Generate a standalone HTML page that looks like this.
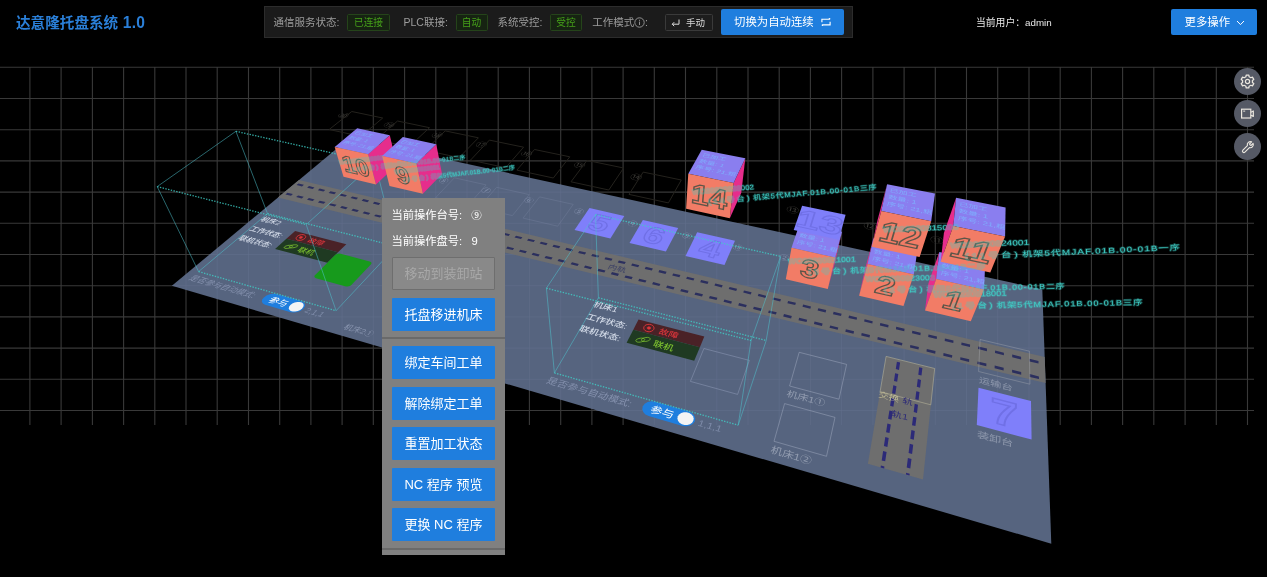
<!DOCTYPE html>
<html lang="zh-CN">
<head>
<meta charset="utf-8">
<title>达意隆托盘系统 1.0</title>
<style>
*{box-sizing:border-box;margin:0;padding:0}
html,body{width:1267px;height:577px;overflow:hidden;background:#000;}
body{position:relative;font-family:"Liberation Sans","Noto Sans CJK SC",sans-serif;color:#fff;}
.abs{position:absolute}
#title{position:absolute;left:16px;top:11.8px;height:22px;line-height:22px;font-size:14.6px;font-weight:bold;color:#2a7fd8;white-space:nowrap;letter-spacing:0px}
#status{position:absolute;left:264px;top:6px;width:589px;height:32px;background:#1b1b1b;border:1px solid #2c2c2c;}
#status span{position:absolute;white-space:nowrap}
.lbl{top:0;height:30px;line-height:30px;font-size:10.5px;color:#9c9c9c}
.tag{top:7px;height:17px;line-height:15px;font-size:9.7px;border:1px solid #25441a;background:#162312;color:#45a019;text-align:center;border-radius:1.5px}
.tag.def{border-color:#3a3a3a;background:#1d1d1d;color:#d6d6d6}
.btn{position:absolute;background:#1f7ede;color:#fff;border-radius:2px;white-space:nowrap;text-align:center}
#user{position:absolute;left:976px;top:12.6px;height:20px;line-height:20px;font-size:9.8px;color:#e8e8e8;white-space:nowrap}
.cbtn{position:absolute;width:27px;height:27px;border-radius:50%;background:#555965;left:1233.9px}
.cbtn svg{position:absolute;left:6px;top:6px;width:15px;height:15px}
#panel{position:absolute;left:382px;top:198px;width:123px;height:357px;background:#808080;}
#panel .t{position:absolute;left:9.6px;font-size:11.25px;color:#fff;white-space:nowrap;height:16px;line-height:16px}
#panel .b{position:absolute;left:10px;width:103px;height:33px;line-height:33px;font-size:13px;background:#1f7ede;color:#fff;text-align:center;border-radius:1px;white-space:nowrap}
#panel .b.dis{background:#898989;border:1px solid #6e6e6e;color:#a8a8a8;line-height:31px}
#panel .hr{position:absolute;left:0;width:123px;height:2px;background:#6a6a6a}
</style>
</head>
<body>
<div id="root" style="position:absolute;left:0;top:0;width:1267px;height:577px;will-change:transform;transform:translateZ(0)">
<svg class="abs" style="left:0;top:0" width="1267" height="577" viewBox="0 0 1267 577" font-family="Liberation Sans, Noto Sans CJK SC, sans-serif">
<path d="M-1.3 67.3V425M29.9 67.3V425M61.1 67.3V425M92.4 67.3V425M123.6 67.3V425M154.8 67.3V425M186 67.3V425M217.2 67.3V425M248.5 67.3V425M279.7 67.3V425M310.9 67.3V425M342.1 67.3V425M373.3 67.3V425M404.6 67.3V425M435.8 67.3V425M467 67.3V425M498.2 67.3V425M529.4 67.3V425M560.7 67.3V425M591.9 67.3V425M623.1 67.3V425M654.3 67.3V425M685.5 67.3V425M716.8 67.3V425M748 67.3V425M779.2 67.3V425M810.4 67.3V425M841.6 67.3V425M872.9 67.3V425M904.1 67.3V425M935.3 67.3V425M966.5 67.3V425M997.7 67.3V425M1029 67.3V425M1060.2 67.3V425M1091.4 67.3V425M1122.6 67.3V425M1153.8 67.3V425M1185.1 67.3V425M1216.3 67.3V425M1247.5 67.3V425M0 67.3H1254M0 98.5H1254M0 129.7H1254M0 160.9H1254M0 192.1H1254M0 223.3H1254M0 254.5H1254M0 285.7H1254M0 316.9H1254M0 348.1H1254M0 379.3H1254M0 410.5H1254" stroke="#393939" stroke-width="1.1" fill="none"/>
<g stroke="#24221d" stroke-width="1" fill="none">
<polygon points="351.8,111.5 382.7,118 360.9,136.4 329.2,129.5" fill="none"/>
<polygon points="397.5,121 429.5,127.7 408.9,146.8 376,139.7" fill="none"/>
<polygon points="445.2,130.9 478.4,137.8 459.1,157.6 425.1,150.3" fill="none"/>
<polygon points="489.4,140.1 523.6,147.2 505.7,167.7 470.5,160.1" fill="none"/>
<polygon points="534.5,149.5 569.8,156.8 553.3,178 516.9,170.1" fill="none"/>
<polygon points="587,160.4 623.6,168 608.8,190 571,181.8" fill="none"/>
<polygon points="643.2,172.1 681.3,180 668.4,202.9 629,194.4" fill="none"/>
</g>
<text transform="matrix(0.4567 0.0963 -0.3285 0.2599 340.8 117.4)" font-size="20" fill="#3b3a36" text-anchor="middle">⑳</text>
<text transform="matrix(0.4727 0.0997 -0.3115 0.2692 386.7 127.1)" font-size="20" fill="#3b3a36" text-anchor="middle">⑲</text>
<text transform="matrix(0.4897 0.1033 -0.2929 0.2792 434.9 137.3)" font-size="20" fill="#3b3a36" text-anchor="middle">⑱</text>
<text transform="matrix(0.5058 0.1067 -0.2749 0.2885 479.4 146.7)" font-size="20" fill="#3b3a36" text-anchor="middle">⑰</text>
<text transform="matrix(0.5225 0.1102 -0.2558 0.2982 524.8 156.2)" font-size="20" fill="#3b3a36" text-anchor="middle">⑯</text>
<text transform="matrix(0.5422 0.1143 -0.2326 0.3097 577.8 167.4)" font-size="20" fill="#3b3a36" text-anchor="middle">⑮</text>
<text transform="matrix(0.5638 0.1189 -0.2065 0.3222 634.5 179.4)" font-size="20" fill="#3b3a36" text-anchor="middle">⑭</text>
<text transform="matrix(0.6257 0.1320 -0.1282 0.3583 791.8 212.5)" font-size="20" fill="#3b3a36" text-anchor="middle">⑬</text>
<text transform="matrix(0.6575 0.1387 -0.0861 0.3769 869.4 228.9)" font-size="20" fill="#3b3a36" text-anchor="middle">⑫</text>
<text transform="matrix(0.6856 0.1446 -0.0480 0.3933 936.5 243.1)" font-size="20" fill="#3b3a36" text-anchor="middle">⑪</text>
<polygon points="349.2,138.3 1042.3,289.4 1051.3,543.7 171.9,285.8" fill="#56647f"/>
<clipPath id="fc"><polygon points="349.2,138.3 1042.3,289.4 1051.3,543.7 171.9,285.8"/></clipPath>
<path d="M-1.3 67.3V425M29.9 67.3V425M61.1 67.3V425M92.4 67.3V425M123.6 67.3V425M154.8 67.3V425M186 67.3V425M217.2 67.3V425M248.5 67.3V425M279.7 67.3V425M310.9 67.3V425M342.1 67.3V425M373.3 67.3V425M404.6 67.3V425M435.8 67.3V425M467 67.3V425M498.2 67.3V425M529.4 67.3V425M560.7 67.3V425M591.9 67.3V425M623.1 67.3V425M654.3 67.3V425M685.5 67.3V425M716.8 67.3V425M748 67.3V425M779.2 67.3V425M810.4 67.3V425M841.6 67.3V425M872.9 67.3V425M904.1 67.3V425M935.3 67.3V425M966.5 67.3V425M997.7 67.3V425M1029 67.3V425M1060.2 67.3V425M1091.4 67.3V425M1122.6 67.3V425M1153.8 67.3V425M1185.1 67.3V425M1216.3 67.3V425M1247.5 67.3V425M0 67.3H1254M0 98.5H1254M0 129.7H1254M0 160.9H1254M0 192.1H1254M0 223.3H1254M0 254.5H1254M0 285.7H1254M0 316.9H1254M0 348.1H1254M0 379.3H1254M0 410.5H1254" stroke="#63708c" stroke-width="1" fill="none" opacity="0.55" clip-path="url(#fc)"/>
<polygon points="299,180 1044.7,357 1045.6,383.1 277.9,197.6" fill="#6e6e6e"/>
<path d="M298.4 183.5L303.9 184.8L302 186.4L296.5 185.1ZM309 186.1L314.5 187.4L312.7 189L307.1 187.7ZM319.7 188.6L325.3 190L323.4 191.6L317.8 190.3ZM330.5 191.2L336.1 192.6L334.3 194.2L328.6 192.9ZM341.4 193.8L347 195.2L345.2 196.8L339.5 195.5ZM352.3 196.5L358.1 197.8L356.3 199.5L350.5 198.1ZM363.4 199.1L369.2 200.5L367.4 202.2L361.6 200.8ZM374.5 201.8L380.4 203.2L378.6 204.9L372.8 203.5ZM385.8 204.5L391.6 205.9L389.9 207.6L384 206.2ZM397.1 207.2L403 208.6L401.3 210.3L395.4 208.9ZM408.6 209.9L414.5 211.4L412.8 213.1L406.9 211.7ZM420.1 212.7L426.1 214.1L424.5 215.9L418.4 214.5ZM431.7 215.5L437.8 216.9L436.2 218.7L430.1 217.3ZM443.4 218.3L449.6 219.8L448 221.6L441.8 220.1ZM455.3 221.1L461.4 222.6L459.9 224.4L453.7 222.9ZM467.2 224L473.4 225.5L471.9 227.3L465.7 225.8ZM479.2 226.9L485.5 228.4L484 230.2L477.7 228.7ZM491.4 229.8L497.7 231.3L496.2 233.2L489.9 231.6ZM503.6 232.7L510 234.3L508.6 236.1L502.2 234.6ZM516 235.7L522.4 237.2L521 239.1L514.5 237.6ZM528.4 238.7L535 240.2L533.6 242.1L527 240.6ZM541 241.7L547.6 243.3L546.2 245.2L539.6 243.6ZM553.7 244.7L560.3 246.3L559 248.3L552.4 246.7ZM566.5 247.8L573.2 249.4L571.9 251.4L565.2 249.8ZM579.4 250.9L586.2 252.5L584.9 254.5L578.1 252.9ZM592.5 254L599.3 255.7L598 257.6L591.2 256ZM605.6 257.2L612.5 258.8L611.3 260.8L604.4 259.2ZM618.9 260.4L625.8 262L624.6 264.1L617.7 262.4ZM632.3 263.6L639.3 265.2L638.1 267.3L631.1 265.6ZM645.8 266.8L652.9 268.5L651.8 270.6L644.7 268.9ZM659.4 270.1L666.6 271.8L665.5 273.9L658.4 272.2ZM673.2 273.4L680.4 275.1L679.4 277.2L672.2 275.5ZM687.1 276.7L694.4 278.5L693.4 280.6L686.1 278.8ZM701.1 280.1L708.5 281.8L707.5 284L700.2 282.2ZM715.3 283.5L722.7 285.2L721.8 287.4L714.4 285.6ZM729.6 286.9L737.1 288.7L736.2 290.9L728.7 289.1ZM744 290.4L751.6 292.2L750.7 294.4L743.2 292.6ZM758.6 293.8L766.2 295.7L765.4 297.9L757.8 296.1ZM773.3 297.4L781 299.2L780.2 301.5L772.5 299.6ZM788.1 300.9L795.9 302.8L795.2 305.1L787.4 303.2ZM803.1 304.5L811 306.4L810.3 308.7L802.5 306.8ZM818.3 308.2L826.2 310.1L825.6 312.4L817.6 310.5ZM833.6 311.8L841.6 313.7L841 316.1L833 314.2ZM849 315.5L857.1 317.5L856.6 319.8L848.5 317.9ZM864.6 319.3L872.7 321.2L872.3 323.6L864.1 321.6ZM880.3 323L888.6 325L888.2 327.4L879.9 325.4ZM896.2 326.8L904.6 328.8L904.2 331.3L895.9 329.3ZM912.3 330.7L920.7 332.7L920.4 335.2L912 333.2ZM928.5 334.6L937 336.6L936.7 339.1L928.2 337.1ZM944.9 338.5L953.5 340.6L953.3 343.1L944.7 341ZM961.5 342.5L970.1 344.6L970 347.1L961.3 345ZM978.2 346.5L987 348.6L986.9 351.2L978.1 349.1ZM995.1 350.5L1003.9 352.7L1003.9 355.3L995 353.1ZM1012.2 354.6L1021.1 356.8L1021.1 359.4L1012.2 357.3ZM1029.4 358.8L1038.5 360.9L1038.5 363.6L1029.5 361.4Z" fill="#2b2f5e"/>
<path d="M287.4 192.8L292.9 194.1L291 195.8L285.4 194.4ZM298.1 195.4L303.7 196.8L301.8 198.4L296.1 197ZM308.9 198L314.6 199.4L312.6 201.1L307 199.7ZM319.8 200.7L325.5 202.1L323.6 203.8L317.9 202.4ZM330.8 203.4L336.6 204.8L334.7 206.5L328.9 205.1ZM341.9 206.1L347.7 207.5L345.9 209.2L340.1 207.8ZM353.1 208.8L358.9 210.2L357.1 212L351.3 210.6ZM364.4 211.6L370.3 213L368.5 214.8L362.6 213.3ZM375.8 214.4L381.7 215.8L379.9 217.6L374 216.1ZM387.2 217.2L393.2 218.6L391.5 220.4L385.5 218.9ZM398.8 220L404.8 221.5L403.1 223.3L397.1 221.8ZM410.5 222.8L416.6 224.3L414.9 226.1L408.8 224.6ZM422.3 225.7L428.4 227.2L426.7 229.1L420.6 227.5ZM434.1 228.6L440.3 230.1L438.7 232L432.5 230.5ZM446.1 231.5L452.4 233.1L450.8 234.9L444.5 233.4ZM458.2 234.5L464.5 236L462.9 237.9L456.6 236.4ZM470.4 237.5L476.8 239L475.2 240.9L468.8 239.4ZM482.7 240.5L489.1 242.1L487.6 244L481.2 242.4ZM495.1 243.5L501.6 245.1L500.1 247L493.6 245.4ZM507.6 246.6L514.2 248.2L512.7 250.1L506.1 248.5ZM520.3 249.7L526.9 251.3L525.4 253.2L518.8 251.6ZM533 252.8L539.7 254.4L538.3 256.4L531.6 254.8ZM545.9 255.9L552.6 257.6L551.2 259.6L544.5 257.9ZM558.9 259.1L565.6 260.7L564.3 262.8L557.5 261.1ZM572 262.3L578.8 264L577.5 266L570.6 264.3ZM585.2 265.5L592.1 267.2L590.8 269.3L583.9 267.6ZM598.5 268.8L605.5 270.5L604.3 272.6L597.3 270.9ZM612 272.1L619 273.8L617.8 275.9L610.8 274.2ZM625.6 275.4L632.7 277.1L631.5 279.3L624.4 277.5ZM639.3 278.7L646.5 280.5L645.3 282.6L638.2 280.9ZM653.2 282.1L660.4 283.9L659.3 286.1L652.1 284.3ZM667.2 285.5L674.5 287.3L673.4 289.5L666.1 287.7ZM681.3 289L688.6 290.8L687.6 293L680.2 291.2ZM695.5 292.5L703 294.3L702 296.5L694.5 294.7ZM709.9 296L717.4 297.8L716.5 300.1L708.9 298.2ZM724.4 299.5L732 301.4L731.1 303.7L723.5 301.8ZM739.1 303.1L746.8 305L745.9 307.3L738.2 305.4ZM753.9 306.7L761.6 308.6L760.8 310.9L753.1 309ZM768.9 310.4L776.7 312.3L775.9 314.6L768.1 312.7ZM784 314.1L791.8 316L791.1 318.4L783.2 316.4ZM799.2 317.8L807.2 319.8L806.5 322.1L798.5 320.2ZM814.6 321.6L822.6 323.5L822 325.9L813.9 324ZM830.2 325.4L838.3 327.4L837.7 329.8L829.5 327.8ZM845.9 329.2L854.1 331.2L853.5 333.7L845.3 331.7ZM861.7 333.1L870 335.1L869.5 337.6L861.2 335.6ZM877.8 337L886.1 339L885.7 341.6L877.3 339.5ZM894 341L902.4 343L902 345.6L893.5 343.5ZM910.3 344.9L918.9 347L918.5 349.6L910 347.5ZM926.8 349L935.5 351.1L935.2 353.7L926.5 351.6ZM943.5 353.1L952.3 355.2L952 357.8L943.3 355.7ZM960.4 357.2L969.2 359.3L969.1 362L960.2 359.8ZM977.5 361.4L986.4 363.5L986.3 366.2L977.3 364ZM994.7 365.6L1003.7 367.8L1003.6 370.5L994.6 368.2ZM1012.1 369.8L1021.2 372L1021.2 374.8L1012.1 372.5ZM1029.7 374.1L1038.9 376.4L1039 379.1L1029.7 376.9Z" fill="#2b2f5e"/>
<text transform="matrix(0.4447 0.1083 -0.1762 0.2948 607.0 268.4)" font-size="20" fill="#3a3f66" text-anchor="start">内轨</text>
<polygon points="886.1,356.4 934.7,368.5 923,479.4 867.9,463.7" fill="#6e6e6e"/>
<path d="M896.9 361.7L900.1 362.5L899 369.9L895.8 369.1ZM895.1 373.3L898.3 374.1L897.2 381.8L894 381ZM893.3 385.3L896.5 386.2L895.3 394L892.1 393.2ZM891.4 397.7L894.7 398.5L893.4 406.7L890.1 405.8ZM889.4 410.4L892.8 411.3L891.5 419.7L888.1 418.8ZM887.4 423.6L890.8 424.5L889.5 433.1L886.1 432.2ZM885.3 437.1L888.7 438.1L887.4 447L883.9 446ZM883.1 451.1L886.6 452.1L885.2 461.3L881.7 460.4ZM880.9 465.6L884.4 466.6L884.2 468.4L880.6 467.4Z" fill="#2c2a78"/>
<path d="M919.2 367.3L922.4 368.1L921.5 375.6L918.3 374.8ZM917.8 379.1L921 379.9L920.1 387.7L916.8 386.8ZM916.3 391.3L919.5 392.1L918.6 400.1L915.3 399.2ZM914.7 403.8L918 404.7L917 412.9L913.7 412ZM913.1 416.7L916.5 417.6L915.4 426.1L912 425.2ZM911.4 430.1L914.8 431L913.8 439.8L910.3 438.8ZM909.7 443.8L913.2 444.8L912.1 453.9L908.6 452.9ZM907.9 458.1L911.5 459.1L910.3 468.4L906.7 467.4ZM906.1 472.8L909.7 473.8L909.5 475.6L905.9 474.6Z" fill="#2c2a78"/>
<polygon points="886.1,356.4 934.7,368.5 930.8,404.8 880.1,391.6" fill="none" stroke="#b9b59a" stroke-width="0.8" opacity="0.7"/>
<text transform="matrix(0.5178 0.1362 -0.0637 0.3728 878.0 396.8)" font-size="20" fill="#d8d2a0" text-anchor="start" opacity="0.75">交换</text>
<text transform="matrix(0.5256 0.1383 -0.0531 0.3785 902.0 403.1)" font-size="20" fill="#2c2a78" text-anchor="start">轨</text>
<text transform="matrix(0.5320 0.1426 -0.0590 0.3904 891.1 415.9)" font-size="20" fill="#2c2a78" text-anchor="start">轨1</text>
<polygon points="980.1,339.5 1029.4,351.2 1029.9,384.2 978.6,371.5" fill="none" stroke="#b0b4ba" stroke-width="0.8" opacity="0.45"/>
<text transform="matrix(0.5632 0.1412 -0.0185 0.3862 978.8 382.5)" font-size="20" fill="#b9c0cf" text-anchor="start" opacity="0.55">运输台</text>
<g stroke="#7d89a6" stroke-width="0.8" fill="none" opacity="0.4">
<polygon points="454.4,177.8 486.1,184.9 468.1,205.3 435.6,197.7" fill="none"/>
<polygon points="496.6,187.3 529.2,194.6 512.4,215.6 478.9,207.8" fill="none"/>
<polygon points="539.6,196.9 573.2,204.4 557.7,226.2 523.1,218.1" fill="none"/>
</g>
<text transform="matrix(0.4170 0.0946 -0.2458 0.2566 441.9 182.8)" font-size="20" fill="#8f9bb8" text-anchor="middle" opacity="0.8">⑧</text>
<text transform="matrix(0.4300 0.0976 -0.2312 0.2647 484.3 192.4)" font-size="20" fill="#8f9bb8" text-anchor="middle" opacity="0.8">⑦</text>
<text transform="matrix(0.4434 0.1006 -0.2158 0.2731 527.4 202.2)" font-size="20" fill="#8f9bb8" text-anchor="middle" opacity="0.8">⑥</text>
<text transform="matrix(0.4593 0.1042 -0.1971 0.2830 577.6 213.6)" font-size="20" fill="#8f9bb8" text-anchor="middle" opacity="0.8">⑤</text>
<text transform="matrix(0.4766 0.1081 -0.1762 0.2939 631.3 225.8)" font-size="20" fill="#8f9bb8" text-anchor="middle" opacity="0.8">④</text>
<text transform="matrix(0.4944 0.1122 -0.1542 0.3051 685.8 238.1)" font-size="20" fill="#8f9bb8" text-anchor="middle" opacity="0.8">③</text>
<text transform="matrix(0.5114 0.1160 -0.1327 0.3157 736.7 249.7)" font-size="20" fill="#8f9bb8" text-anchor="middle" opacity="0.8">⑬</text>
<text transform="matrix(0.5272 0.1196 -0.1123 0.3257 783.4 260.3)" font-size="20" fill="#8f9bb8" text-anchor="middle" opacity="0.8">②</text>
<text transform="matrix(0.4057 0.0921 -0.2582 0.2495 404.4 174.3)" font-size="20" fill="#8f9bb8" text-anchor="middle" opacity="0.8">⑨</text>
<text transform="matrix(0.3656 0.0942 -0.3039 0.2560 259.7 220.4)" font-size="20" fill="#dfe6f2" text-anchor="start" opacity="0.92" font-weight="500">机床2</text>
<text transform="matrix(0.3695 0.0970 -0.3131 0.2637 248.4 230.0)" font-size="20" fill="#dfe6f2" text-anchor="start" opacity="0.92" font-weight="500">工作状态:</text>
<text transform="matrix(0.3731 0.0998 -0.3221 0.2713 237.4 239.2)" font-size="20" fill="#dfe6f2" text-anchor="start" opacity="0.92" font-weight="500">联机状态:</text>
<polygon points="295.1,230.9 346.3,244.2 338,252.3 286.4,238.8" fill="#4a2227"/>
<polygon points="286.4,238.8 338,252.3 327.4,262.8 275.1,248.9" fill="#1f3a22"/>
<polygon points="304.7,238.5 303.5,239.3 301.9,240 300.2,240.3 298.6,240.3 297.3,240 296.4,239.3 296.1,238.4 296.3,237.5 297.1,236.5 298.3,235.6 299.9,235 301.5,234.6 303.1,234.6 304.4,235 305.3,235.6 305.7,236.5 305.5,237.5" fill="none" stroke="#e0353a" stroke-width="0.9"/>
<polygon points="302.2,237.8 301.7,238.1 301.2,238.3 300.7,238.4 300.1,238.4 299.7,238.3 299.4,238.1 299.3,237.8 299.3,237.5 299.6,237.1 300,236.8 300.5,236.6 301.1,236.5 301.6,236.5 302.1,236.6 302.4,236.8 302.5,237.1 302.4,237.5" fill="#e0353a" stroke="#e0353a" stroke-width="0.6"/>
<text transform="matrix(0.3717 0.0971 -0.2845 0.2641 306.7 241.8)" font-size="20" fill="#d8343a" text-anchor="start" font-weight="500">故障</text>
<polygon points="292.5,246.2 292.2,246.7 291.5,247.3 290.3,247.8 288.9,248.1 287.4,248.4 286.1,248.4 285,248.3 284.3,247.9 284.1,247.5 284.4,247 285.2,246.4 286.3,245.9 287.7,245.5 289.2,245.3 290.5,245.3 291.6,245.4 292.3,245.7" fill="none" stroke="#7bbf2e" stroke-width="0.8"/>
<polygon points="297.7,245.7 297.5,246.2 296.7,246.7 295.5,247.2 294.1,247.6 292.7,247.8 291.3,247.9 290.2,247.7 289.5,247.4 289.3,247 289.6,246.4 290.4,245.9 291.5,245.4 292.9,245 294.4,244.8 295.7,244.8 296.8,244.9 297.5,245.2" fill="none" stroke="#7bbf2e" stroke-width="0.8"/>
<text transform="matrix(0.3885 0.1033 -0.3028 0.2811 296.5 251.2)" font-size="20" fill="#7bbf2e" text-anchor="start" font-weight="500">联机</text>
<polygon points="369.7,261.4 370.8,261.9 371.4,262.6 371.4,263.6 370.8,264.5 351.6,284.8 350.4,285.7 348.9,286.3 347.3,286.5 345.9,286.4 316,278.2 314.9,277.6 314.4,276.8 314.5,275.8 315.2,274.9 335.1,255.1 336.3,254.3 337.7,253.8 339.2,253.6 340.6,253.7" fill="#179a1c"/>
<text transform="matrix(0.3883 0.1122 -0.3633 0.3056 188.2 279.5)" font-size="20" fill="#8995b2" text-anchor="start" opacity="0.9">是否参与自动模式:</text>
<polygon points="301.7,301.2 303.9,302.4 305,304.2 304.8,306.4 303.3,308.7 300.7,310.7 297.3,312 293.9,312.6 290.7,312.2 265.1,304.8 262.9,303.6 261.9,301.8 262.2,299.6 263.9,297.4 266.5,295.5 269.8,294.2 273.2,293.7 276.3,294" fill="#1f7ede"/>
<text transform="matrix(0.4405 0.1271 -0.3615 0.3467 267.2 301.7)" font-size="20" fill="#fff" text-anchor="start">参与</text>
<polygon points="302.1,308.4 300.2,309.9 297.8,311 295.2,311.6 292.7,311.6 290.7,311 289.3,309.8 288.8,308.4 289.1,306.7 290.4,305 292.3,303.5 294.7,302.4 297.3,301.9 299.7,301.9 301.8,302.5 303.1,303.5 303.7,305 303.3,306.7" fill="#f4f4f4"/>
<text transform="matrix(0.3963 0.1143 -0.3051 0.3120 303.7 312.0)" font-size="20" fill="#8390ae" text-anchor="start" opacity="0.9">2,1,1</text>
<text transform="matrix(0.4667 0.1203 -0.1926 0.3281 592.4 306.2)" font-size="20" fill="#dfe6f2" text-anchor="start" opacity="0.92" font-weight="500">机床1</text>
<text transform="matrix(0.4734 0.1243 -0.1991 0.3393 585.2 318.4)" font-size="20" fill="#dfe6f2" text-anchor="start" opacity="0.92" font-weight="500">工作状态:</text>
<text transform="matrix(0.4800 0.1283 -0.2057 0.3504 578.2 330.4)" font-size="20" fill="#dfe6f2" text-anchor="start" opacity="0.92" font-weight="500">联机状态:</text>
<polygon points="638.5,319.6 704.3,336.6 699.9,347.2 633.3,329.7" fill="#4a2227"/>
<polygon points="633.3,329.7 699.9,347.2 694.2,360.8 626.6,342.8" fill="#1f3a22"/>
<polygon points="653.8,329.3 652.9,330.4 651.5,331.2 649.8,331.7 648,331.7 646.3,331.2 644.9,330.4 644,329.3 643.7,328 644,326.7 644.9,325.6 646.2,324.8 647.9,324.4 649.7,324.4 651.4,324.8 652.8,325.6 653.7,326.8 654.1,328" fill="none" stroke="#e0353a" stroke-width="0.9"/>
<polygon points="650.5,328.4 650.2,328.8 649.8,329.1 649.2,329.2 648.6,329.2 648,329.1 647.6,328.8 647.3,328.4 647.2,328 647.2,327.6 647.5,327.2 648,326.9 648.6,326.8 649.2,326.8 649.7,326.9 650.2,327.2 650.5,327.6 650.6,328" fill="#e0353a" stroke="#e0353a" stroke-width="0.6"/>
<text transform="matrix(0.4785 0.1250 -0.1632 0.3414 658.0 333.6)" font-size="20" fill="#d8343a" text-anchor="start" font-weight="500">故障</text>
<polygon points="644.7,339.3 644.7,340 644.1,340.7 643.1,341.3 641.7,341.8 640.2,342.1 638.7,342.2 637.3,342 636.4,341.6 635.9,341 635.9,340.3 636.4,339.6 637.5,339 638.8,338.5 640.4,338.2 641.9,338.1 643.2,338.3 644.2,338.7" fill="none" stroke="#7bbf2e" stroke-width="0.8"/>
<polygon points="650.2,338.6 650.2,339.3 649.7,340 648.7,340.6 647.3,341.1 645.8,341.4 644.3,341.5 642.9,341.3 641.9,340.9 641.4,340.3 641.5,339.6 642,338.9 643,338.3 644.4,337.8 645.9,337.5 647.4,337.4 648.8,337.6 649.7,338" fill="none" stroke="#7bbf2e" stroke-width="0.8"/>
<text transform="matrix(0.5020 0.1335 -0.1744 0.3647 652.2 345.8)" font-size="20" fill="#7bbf2e" text-anchor="start" font-weight="500">联机</text>
<polygon points="703.9,348.5 749.3,360.4 737.6,394.4 690.4,381.4" fill="none" stroke="#8f9bb8" stroke-width="0.8" opacity="0.65"/>
<text transform="matrix(0.5078 0.1467 -0.2363 0.4012 545.8 382.7)" font-size="20" fill="#8995b2" text-anchor="start" opacity="0.9">是否参与自动模式:</text>
<polygon points="688.4,411.3 691.7,412.8 694.1,415.3 695.2,418.2 694.8,421.2 693,423.8 690.1,425.6 686.4,426.3 682.6,425.9 648.7,416 645.4,414.5 643.2,412.1 642.3,409.2 642.8,406.2 644.7,403.7 647.7,402 651.3,401.3 655,401.8" fill="#1f7ede"/>
<text transform="matrix(0.5812 0.1677 -0.2037 0.4593 649.2 412.0)" font-size="20" fill="#fff" text-anchor="start">参与</text>
<polygon points="693.3,420.8 692.1,422.7 690,424.2 687.3,425 684.5,425 681.8,424.2 679.5,422.7 678,420.8 677.4,418.5 677.8,416.3 679.1,414.4 681.2,412.9 683.8,412.2 686.6,412.2 689.3,412.9 691.5,414.4 693,416.3 693.7,418.5" fill="#f4f4f4"/>
<text transform="matrix(0.5251 0.1515 -0.1574 0.4150 697.3 425.5)" font-size="20" fill="#8390ae" text-anchor="start" opacity="0.9">1,1,1</text>
<text transform="matrix(0.3965 0.1152 -0.2842 0.3145 342.8 328.5)" font-size="20" fill="#9aa5bf" text-anchor="start" opacity="0.75">机床2①</text>
<polygon points="799.2,352.3 846.6,364.4 839,399.2 789.6,386" fill="none" stroke="#aab3c8" stroke-width="0.8" opacity="0.55"/>
<text transform="matrix(0.5399 0.1461 -0.1136 0.3999 786.0 395.9)" font-size="20" fill="#b9c0cf" text-anchor="start" opacity="0.6">机床1①</text>
<polygon points="784.6,403.6 835,417.4 826.5,456.3 774,441.3" fill="none" stroke="#aab3c8" stroke-width="0.8" opacity="0.55"/>
<text transform="matrix(0.5745 0.1669 -0.1300 0.4575 769.9 452.6)" font-size="20" fill="#b9c0cf" text-anchor="start" opacity="0.6">机床1②</text>
<polygon points="589.5,208.1 624.3,215.9 610.4,238.4 574.5,230.1" fill="#7f7ffa"/>
<text transform="matrix(1.6735 0.3872 -0.6859 1.0524 594.8 230.4)" font-size="20" fill="none" text-anchor="middle" stroke="#7070e6" stroke-width="0.8" font-weight="bold">5</text>
<polygon points="642.9,220 678.2,227.9 665.9,251.4 629.5,242.9" fill="#7f7ffa"/>
<text transform="matrix(1.7376 0.4020 -0.6079 1.0934 649.8 243.1)" font-size="20" fill="none" text-anchor="middle" stroke="#7070e6" stroke-width="0.8" font-weight="bold">6</text>
<polygon points="697.2,232.2 735,240.7 724.5,265 685.5,255.9" fill="#7f7ffa"/>
<text transform="matrix(1.8053 0.4177 -0.5235 1.1368 706.8 256.3)" font-size="20" fill="none" text-anchor="middle" stroke="#7070e6" stroke-width="0.8" font-weight="bold">4</text>
<polygon points="978.5,387.8 1031,401.1 1031.6,439.6 976.8,425.1" fill="#7f7ffa"/>
<text transform="matrix(2.4741 0.6475 -0.0276 1.7738 1004.1 425.4)" font-size="20" fill="none" text-anchor="middle" stroke="#7070e6" stroke-width="0.8" font-weight="bold">7</text>
<text transform="matrix(0.6015 0.1609 -0.0207 0.4409 977.0 437.3)" font-size="20" fill="#b9c0cf" text-anchor="start" opacity="0.55">装卸台</text>
<line x1="267.5" y1="213.6" x2="235.9" y2="131.3" stroke="#4fc4cf" stroke-width="0.8" opacity="0.65"/>
<line x1="198.6" y1="271.6" x2="157.2" y2="186.6" stroke="#4fc4cf" stroke-width="0.8" opacity="0.65"/>
<line x1="396.2" y1="246.4" x2="374.8" y2="162.6" stroke="#4fc4cf" stroke-width="0.8" opacity="0.65"/>
<line x1="336.1" y1="310.7" x2="306.2" y2="224.6" stroke="#4fc4cf" stroke-width="0.8" opacity="0.65"/>
<line x1="267.5" y1="213.6" x2="198.6" y2="271.6" stroke="#4fc4cf" stroke-width="0.8" opacity="0.65"/>
<line x1="396.2" y1="246.4" x2="336.1" y2="310.7" stroke="#4fc4cf" stroke-width="0.8" opacity="0.65"/>
<line x1="235.9" y1="131.3" x2="157.2" y2="186.6" stroke="#4fc4cf" stroke-width="0.8" opacity="0.65"/>
<line x1="374.8" y1="162.6" x2="306.2" y2="224.6" stroke="#4fc4cf" stroke-width="0.8" opacity="0.65"/>
<line x1="267.5" y1="213.6" x2="396.2" y2="246.4" stroke="#3fd0c8" stroke-width="1.3" stroke-dasharray="1.4 1.4" opacity="0.8"/>
<line x1="198.6" y1="271.6" x2="336.1" y2="310.7" stroke="#3fd0c8" stroke-width="1.3" stroke-dasharray="1.4 1.4" opacity="0.8"/>
<line x1="235.9" y1="131.3" x2="374.8" y2="162.6" stroke="#3fd0c8" stroke-width="1.3" stroke-dasharray="1.4 1.4" opacity="0.8"/>
<line x1="157.2" y1="186.6" x2="306.2" y2="224.6" stroke="#3fd0c8" stroke-width="1.3" stroke-dasharray="1.4 1.4" opacity="0.8"/>
<line x1="598.4" y1="297.8" x2="595.5" y2="214.6" stroke="#4fc4cf" stroke-width="0.8" opacity="0.65"/>
<line x1="554.4" y1="372.9" x2="546.4" y2="288.2" stroke="#4fc4cf" stroke-width="0.8" opacity="0.65"/>
<line x1="766.2" y1="340.5" x2="780.6" y2="256.4" stroke="#4fc4cf" stroke-width="0.8" opacity="0.65"/>
<line x1="738.2" y1="425.2" x2="751.1" y2="340.5" stroke="#4fc4cf" stroke-width="0.8" opacity="0.65"/>
<line x1="598.4" y1="297.8" x2="554.4" y2="372.9" stroke="#4fc4cf" stroke-width="0.8" opacity="0.65"/>
<line x1="766.2" y1="340.5" x2="738.2" y2="425.2" stroke="#4fc4cf" stroke-width="0.8" opacity="0.65"/>
<line x1="595.5" y1="214.6" x2="546.4" y2="288.2" stroke="#4fc4cf" stroke-width="0.8" opacity="0.65"/>
<line x1="780.6" y1="256.4" x2="751.1" y2="340.5" stroke="#4fc4cf" stroke-width="0.8" opacity="0.65"/>
<line x1="598.4" y1="297.8" x2="766.2" y2="340.5" stroke="#3fd0c8" stroke-width="1.3" stroke-dasharray="1.4 1.4" opacity="0.8"/>
<line x1="554.4" y1="372.9" x2="738.2" y2="425.2" stroke="#3fd0c8" stroke-width="1.3" stroke-dasharray="1.4 1.4" opacity="0.8"/>
<line x1="595.5" y1="214.6" x2="780.6" y2="256.4" stroke="#3fd0c8" stroke-width="1.3" stroke-dasharray="1.4 1.4" opacity="0.8"/>
<line x1="546.4" y1="288.2" x2="751.1" y2="340.5" stroke="#3fd0c8" stroke-width="1.3" stroke-dasharray="1.4 1.4" opacity="0.8"/>
<g transform="translate(381 166.5) rotate(-6.39) scale(1.000 1)" fill="#3fd0c8" font-size="5.50" opacity="1.0"><text x="0" y="1.98" textLength="84.5">机架5代MJAF.01B.00-01B二序</text><text x="-2.8" y="1.98" text-anchor="end" textLength="29.7">(10号台)</text><text x="3.0" y="-6.82" text-anchor="end" textLength="44.3">WO20230823002</text></g>
<g transform="translate(431 176.8) rotate(-6.41) scale(1.000 1)" fill="#3fd0c8" font-size="5.60" opacity="1.0"><text x="0" y="2.02" textLength="84.2">机架5代MJAF.01B.00-01B二序</text><text x="-2.8" y="2.02" text-anchor="end" textLength="25.2">(9号台)</text><text x="9.5" y="-6.94" text-anchor="end" textLength="45.1">WO20230823001</text></g>
<g transform="translate(753.4 197.6) rotate(-4.93) scale(1.146 1)" fill="#3fd0c8" font-size="6.70" opacity="1.0"><text x="0" y="2.41" textLength="107.6">机架5代MJAF.01B.00-01B三序</text><text x="-3.4" y="2.41" text-anchor="end" textLength="36.2">(14号台)</text><text x="1.2" y="-8.31" text-anchor="end" textLength="54.0">WO20230828002</text></g>
<g transform="translate(850.4 270.5) rotate(-1.83) scale(1.198 1)" fill="#3fd0c8" font-size="7.00" opacity="1.0"><text x="0" y="2.52" textLength="112.4">机架5代MJAF.01B.00-01B二序</text><text x="-3.5" y="2.52" text-anchor="end" textLength="31.5">(3号台)</text><text x="4.6" y="-8.68" text-anchor="end" textLength="56.4">WO20230811001</text></g>
<g transform="translate(926.7 289) rotate(-1.29) scale(1.206 1)" fill="#3fd0c8" font-size="7.10" opacity="1.0"><text x="0" y="2.56" textLength="114.1">机架5代MJAF.01B.00-01B二序</text><text x="-3.5" y="2.56" text-anchor="end" textLength="31.9">(2号台)</text><text x="6.8" y="-8.80" text-anchor="end" textLength="57.2">WO20230823003</text></g>
<g transform="translate(997 305) rotate(-1.11) scale(1.238 1)" fill="#3fd0c8" font-size="7.30" opacity="1.0"><text x="0" y="2.63" textLength="117.3">机架5代MJAF.01B.00-01B三序</text><text x="-3.6" y="2.63" text-anchor="end" textLength="32.9">(1号台)</text><text x="7.8" y="-9.05" text-anchor="end" textLength="58.8">WO20230818001</text></g>
<g transform="translate(950 238.5) rotate(-1.91) scale(1.316 1)" fill="#3fd0c8" font-size="7.10" opacity="1.0"><text x="6.6" y="-8.80" text-anchor="end" textLength="57.2">WO20230815000</text></g>
<g transform="translate(1022.5 254) rotate(-2.48) scale(1.338 1)" fill="#3fd0c8" font-size="7.30" opacity="1.0"><text x="0" y="2.63" textLength="117.3">机架5代MJAF.01B.00-01B一序</text><text x="-3.6" y="2.63" text-anchor="end" textLength="39.4">(11号台)</text><text x="5.2" y="-9.05" text-anchor="end" textLength="58.8">WO20230824001</text></g>
<polygon points="389.8,135.2 368.1,154.3 376,184.4 396.8,164.9" fill="#e62d8c"/>
<polygon points="357.2,128.2 389.8,135.2 368.1,154.3 334.7,146.9" fill="#8a7eef"/>
<polygon points="334.7,146.9 368.1,154.3 376,184.4 343.5,176.8" fill="#f27c66"/>
<text transform="matrix(0.2961 0.0639 -0.2080 0.1728 353.7 133.6)" font-size="20" fill="#7db4ff" text-anchor="start" opacity="0.85">已加工</text>
<text transform="matrix(0.2980 0.0650 -0.2116 0.1758 348.0 138.4)" font-size="20" fill="#7db4ff" text-anchor="start" opacity="0.85">数量: 1</text>
<text transform="matrix(0.3000 0.0661 -0.2153 0.1789 342.2 143.2)" font-size="20" fill="#7db4ff" text-anchor="start" opacity="0.85">序号: 21,粗</text>
<text transform="matrix(1.1934 0.2756 0.3259 1.1814 357.9 174.4)" font-size="20" fill="none" text-anchor="middle" stroke="#5d5548" stroke-width="0.9" font-weight="bold">10</text>
<polygon points="436.3,144.2 416.4,163.5 422.9,193.8 442,174.1" fill="#e62d8c"/>
<polygon points="402.9,137.1 436.3,144.2 416.4,163.5 382.1,155.9" fill="#8a7eef"/>
<polygon points="382.1,155.9 416.4,163.5 422.9,193.8 389.5,186.1" fill="#f27c66"/>
<text transform="matrix(0.3060 0.0660 -0.1966 0.1784 399.7 142.7)" font-size="20" fill="#7db4ff" text-anchor="start" opacity="0.85">已加工</text>
<text transform="matrix(0.3081 0.0671 -0.2000 0.1816 394.4 147.6)" font-size="20" fill="#7db4ff" text-anchor="start" opacity="0.85">数量: 1</text>
<text transform="matrix(0.3101 0.0683 -0.2036 0.1848 388.9 152.6)" font-size="20" fill="#7db4ff" text-anchor="start" opacity="0.85">序号: 21,粗</text>
<text transform="matrix(1.2326 0.2839 0.2735 1.1877 404.7 183.7)" font-size="20" fill="none" text-anchor="middle" stroke="#5d5548" stroke-width="0.9" font-weight="bold">9</text>
<polygon points="939.3,251.9 936.2,278.9 925,310.6 928.4,283.4" fill="#e62d8c"/>
<polygon points="939.3,251.9 985.3,261.7 984,289.5 936.2,278.9" fill="#8a7eef"/>
<polygon points="936.2,278.9 984,289.5 970.8,321.2 925,310.6" fill="#f27c66"/>
<text transform="matrix(0.4414 0.0952 -0.0288 0.2592 942.0 260.1)" font-size="20" fill="#7db4ff" text-anchor="start" opacity="0.85">已加工</text>
<text transform="matrix(0.4459 0.0972 -0.0294 0.2647 941.2 267.2)" font-size="20" fill="#7db4ff" text-anchor="start" opacity="0.85">数量: 1</text>
<text transform="matrix(0.4505 0.0993 -0.0300 0.2704 940.4 274.5)" font-size="20" fill="#7db4ff" text-anchor="start" opacity="0.85">序号: 21,粗</text>
<text transform="matrix(1.7794 0.4099 -0.4752 1.2419 950.3 309.3)" font-size="20" fill="none" text-anchor="middle" stroke="#5d5548" stroke-width="0.9" font-weight="bold">1</text>
<polygon points="873.3,238.4 867.6,264.1 859.1,295.7 864.9,269.8" fill="#e62d8c"/>
<polygon points="873.3,238.4 917.8,247.9 913.8,274.4 867.6,264.1" fill="#8a7eef"/>
<polygon points="867.6,264.1 913.8,274.4 903.5,306 859.1,295.7" fill="#f27c66"/>
<text transform="matrix(0.4238 0.0915 -0.0533 0.2490 875.1 246.3)" font-size="20" fill="#7db4ff" text-anchor="start" opacity="0.85">已加工</text>
<text transform="matrix(0.4279 0.0934 -0.0544 0.2541 873.6 253.1)" font-size="20" fill="#7db4ff" text-anchor="start" opacity="0.85">数量: 1</text>
<text transform="matrix(0.4322 0.0953 -0.0555 0.2594 872.1 260.1)" font-size="20" fill="#7db4ff" text-anchor="start" opacity="0.85">序号: 21,粗</text>
<text transform="matrix(1.7077 0.3936 -0.3687 1.2387 883.1 294.3)" font-size="20" fill="none" text-anchor="middle" stroke="#5d5548" stroke-width="0.9" font-weight="bold">2</text>
<polygon points="842.1,231.8 835.2,257.6 827.8,289.1 834.8,263" fill="#e62d8c"/>
<polygon points="800,222.8 842.1,231.8 835.2,257.6 791.5,247.8" fill="#8a7eef"/>
<polygon points="791.5,247.8 835.2,257.6 827.8,289.1 785.8,279.3" fill="#f27c66"/>
<text transform="matrix(0.4042 0.0873 -0.0792 0.2373 800.9 230.2)" font-size="20" fill="#7db4ff" text-anchor="start" opacity="0.85">已加工</text>
<text transform="matrix(0.4080 0.0890 -0.0808 0.2421 798.8 236.8)" font-size="20" fill="#7db4ff" text-anchor="start" opacity="0.85">数量: 1</text>
<text transform="matrix(0.4119 0.0908 -0.0824 0.2470 796.5 243.4)" font-size="20" fill="#7db4ff" text-anchor="start" opacity="0.85">序号: 21,粗</text>
<text transform="matrix(1.6297 0.3760 -0.2545 1.2341 808.0 277.7)" font-size="20" fill="none" text-anchor="middle" stroke="#5d5548" stroke-width="0.9" font-weight="bold">3</text>
<polygon points="802.1,205.7 845.6,214.7 838.8,239.7 793.7,229.9" fill="#7f7ffa"/>
<text transform="matrix(2.0565 0.4421 -0.3704 1.2017 817.3 230.7)" font-size="20" fill="none" text-anchor="middle" stroke="#7070e6" stroke-width="0.8" font-weight="bold">13</text>
<polygon points="745.3,158.2 733.6,183.1 729.8,218.2 741.3,192.7" fill="#e62d8c"/>
<polygon points="701.7,149.7 745.3,158.2 733.6,183.1 688.3,173.8" fill="#8a7eef"/>
<polygon points="688.3,173.8 733.6,183.1 729.8,218.2 686.1,208.7" fill="#f27c66"/>
<text transform="matrix(0.3999 0.0794 -0.1182 0.2149 701.5 156.4)" font-size="20" fill="#7db4ff" text-anchor="start" opacity="0.85">已加工</text>
<text transform="matrix(0.4036 0.0810 -0.1206 0.2193 698.3 162.3)" font-size="20" fill="#7db4ff" text-anchor="start" opacity="0.85">数量: 1</text>
<text transform="matrix(0.4073 0.0827 -0.1231 0.2239 695.0 168.3)" font-size="20" fill="#7db4ff" text-anchor="start" opacity="0.85">序号: 21,粗</text>
<text transform="matrix(1.6171 0.3470 -0.1168 1.3684 708.4 206.2)" font-size="20" fill="none" text-anchor="middle" stroke="#5d5548" stroke-width="0.9" font-weight="bold">14</text>
<polygon points="956.1,197.7 953.3,225.9 940.7,261.7 943.9,233.1" fill="#e62d8c"/>
<polygon points="956.1,197.7 1005.6,207.4 1005.1,236.5 953.3,225.9" fill="#8a7eef"/>
<polygon points="953.3,225.9 1005.1,236.5 990.3,272.4 940.7,261.7" fill="#f27c66"/>
<text transform="matrix(0.4722 0.0935 -0.0236 0.2538 959.1 205.7)" font-size="20" fill="#7db4ff" text-anchor="start" opacity="0.85">已加工</text>
<text transform="matrix(0.4774 0.0955 -0.0242 0.2595 958.5 212.6)" font-size="20" fill="#7db4ff" text-anchor="start" opacity="0.85">数量: 1</text>
<text transform="matrix(0.4827 0.0977 -0.0247 0.2654 957.8 219.8)" font-size="20" fill="#7db4ff" text-anchor="start" opacity="0.85">序号: 21,粗</text>
<text transform="matrix(1.9099 0.4086 -0.5354 1.4039 968.1 259.7)" font-size="20" fill="none" text-anchor="middle" stroke="#5d5548" stroke-width="0.9" font-weight="bold">11</text>
<polygon points="887.1,184.2 881.3,211.1 871.7,246.8 877.7,219.4" fill="#e62d8c"/>
<polygon points="887.1,184.2 935,193.6 931.2,221.3 881.3,211.1" fill="#8a7eef"/>
<polygon points="881.3,211.1 931.2,221.3 919.6,257.1 871.7,246.8" fill="#f27c66"/>
<text transform="matrix(0.4522 0.0895 -0.0510 0.2428 889.3 191.8)" font-size="20" fill="#7db4ff" text-anchor="start" opacity="0.85">已加工</text>
<text transform="matrix(0.4570 0.0915 -0.0521 0.2482 887.9 198.5)" font-size="20" fill="#7db4ff" text-anchor="start" opacity="0.85">数量: 1</text>
<text transform="matrix(0.4618 0.0935 -0.0532 0.2537 886.4 205.3)" font-size="20" fill="#7db4ff" text-anchor="start" opacity="0.85">序号: 21,粗</text>
<text transform="matrix(1.8286 0.3911 -0.4154 1.3968 897.7 244.6)" font-size="20" fill="none" text-anchor="middle" stroke="#5d5548" stroke-width="0.9" font-weight="bold">12</text>
<g transform="translate(381 166.5) rotate(-6.39) scale(1.000 1)" fill="#3fd0c8" font-size="5.50" opacity="0.3" stroke="#3fd0c8" stroke-width="1.6" stroke-linejoin="round"><text x="0" y="1.98" textLength="84.5">机架5代MJAF.01B.00-01B二序</text><text x="-2.8" y="1.98" text-anchor="end" textLength="29.7">(10号台)</text><text x="3.0" y="-6.82" text-anchor="end" textLength="44.3">WO20230823002</text></g>
<g transform="translate(431 176.8) rotate(-6.41) scale(1.000 1)" fill="#3fd0c8" font-size="5.60" opacity="0.3" stroke="#3fd0c8" stroke-width="1.6" stroke-linejoin="round"><text x="0" y="2.02" textLength="84.2">机架5代MJAF.01B.00-01B二序</text><text x="-2.8" y="2.02" text-anchor="end" textLength="25.2">(9号台)</text><text x="9.5" y="-6.94" text-anchor="end" textLength="45.1">WO20230823001</text></g>
<g transform="translate(753.4 197.6) rotate(-4.93) scale(1.146 1)" fill="#3fd0c8" font-size="6.70" opacity="0.3" stroke="#3fd0c8" stroke-width="1.6" stroke-linejoin="round"><text x="0" y="2.41" textLength="107.6">机架5代MJAF.01B.00-01B三序</text><text x="-3.4" y="2.41" text-anchor="end" textLength="36.2">(14号台)</text><text x="1.2" y="-8.31" text-anchor="end" textLength="54.0">WO20230828002</text></g>
<g transform="translate(850.4 270.5) rotate(-1.83) scale(1.198 1)" fill="#3fd0c8" font-size="7.00" opacity="0.3" stroke="#3fd0c8" stroke-width="1.6" stroke-linejoin="round"><text x="0" y="2.52" textLength="112.4">机架5代MJAF.01B.00-01B二序</text><text x="-3.5" y="2.52" text-anchor="end" textLength="31.5">(3号台)</text><text x="4.6" y="-8.68" text-anchor="end" textLength="56.4">WO20230811001</text></g>
<g transform="translate(926.7 289) rotate(-1.29) scale(1.206 1)" fill="#3fd0c8" font-size="7.10" opacity="0.3" stroke="#3fd0c8" stroke-width="1.6" stroke-linejoin="round"><text x="0" y="2.56" textLength="114.1">机架5代MJAF.01B.00-01B二序</text><text x="-3.5" y="2.56" text-anchor="end" textLength="31.9">(2号台)</text><text x="6.8" y="-8.80" text-anchor="end" textLength="57.2">WO20230823003</text></g>
<g transform="translate(997 305) rotate(-1.11) scale(1.238 1)" fill="#3fd0c8" font-size="7.30" opacity="0.3" stroke="#3fd0c8" stroke-width="1.6" stroke-linejoin="round"><text x="0" y="2.63" textLength="117.3">机架5代MJAF.01B.00-01B三序</text><text x="-3.6" y="2.63" text-anchor="end" textLength="32.9">(1号台)</text><text x="7.8" y="-9.05" text-anchor="end" textLength="58.8">WO20230818001</text></g>
<g transform="translate(950 238.5) rotate(-1.91) scale(1.316 1)" fill="#3fd0c8" font-size="7.10" opacity="0.3" stroke="#3fd0c8" stroke-width="1.6" stroke-linejoin="round"><text x="6.6" y="-8.80" text-anchor="end" textLength="57.2">WO20230815000</text></g>
<g transform="translate(1022.5 254) rotate(-2.48) scale(1.338 1)" fill="#3fd0c8" font-size="7.30" opacity="0.3" stroke="#3fd0c8" stroke-width="1.6" stroke-linejoin="round"><text x="0" y="2.63" textLength="117.3">机架5代MJAF.01B.00-01B一序</text><text x="-3.6" y="2.63" text-anchor="end" textLength="39.4">(11号台)</text><text x="5.2" y="-9.05" text-anchor="end" textLength="58.8">WO20230824001</text></g>
</svg>

<div id="title">达意隆托盘系统<span style="font-size:15.6px;margin-left:4.6px;letter-spacing:0.3px">1.0</span></div>
<div id="status">
<span class="lbl" style="left:8.5px">通信服务状态:</span>
<span class="tag" style="left:82px;width:43px">已连接</span>
<span class="lbl" style="left:138.5px">PLC联接:</span>
<span class="tag" style="left:190.5px;width:32px">自动</span>
<span class="lbl" style="left:232.5px">系统受控:</span>
<span class="tag" style="left:285px;width:32px">受控</span>
<span class="lbl" style="left:327.3px">工作模式<svg width="11" height="11" viewBox="0 0 11 11" style="vertical-align:-2px;margin-left:-0.3px"><circle cx="5.5" cy="5.5" r="4.7" fill="none" stroke="#9c9c9c" stroke-width="0.9"/><rect x="5.05" y="4.6" width="0.9" height="3.4" fill="#9c9c9c"/><rect x="5.05" y="2.8" width="0.9" height="1" fill="#9c9c9c"/></svg>:</span>
<span class="tag def" style="left:399.5px;width:48px;text-align:left;padding-left:20.5px;font-size:9.5px">手动<svg width="9" height="8" viewBox="0 0 9 8" style="position:absolute;left:5.2px;top:3.5px"><path d="M8 0.5V5.2H1.5M3.2 3.2L1.2 5.2L3.2 7.2" fill="none" stroke="#dcdcdc" stroke-width="1"/></svg></span>
</div>
<div class="btn" style="left:721px;top:9px;width:123px;height:26px;line-height:26px;font-size:11.4px;text-align:left;padding-left:13px">切换为自动连续<svg width="10" height="8" viewBox="0 0 10 8" style="position:absolute;left:99.7px;top:8.6px"><path d="M0.9 4.3V1.2H9.1M7.9 0.2L9.2 1.2M9.1 3.7V6.8H0.9M2.1 7.8L0.8 6.8" fill="none" stroke="#fff" stroke-width="1.15"/></svg></div>
<div id="user">当前用户：admin</div>
<div class="btn" style="left:1171px;top:9px;width:86px;height:26px;line-height:26px;font-size:11.4px;text-align:left;padding-left:13.5px">更多操作<svg width="9" height="6" viewBox="0 0 9 6" style="position:absolute;left:65px;top:10.5px"><path d="M1 1L4.5 4.6L8 1" fill="none" stroke="#fff" stroke-width="1"/></svg></div>

<div class="cbtn" style="top:68px"><svg viewBox="0 0 15 15"><path d="M5.88 2.77L6.19 1.03L8.81 1.03L9.12 2.77L10.79 3.73L12.45 3.13L13.76 5.40L12.41 6.54L12.41 8.46L13.76 9.60L12.45 11.87L10.79 11.27L9.12 12.23L8.81 13.97L6.19 13.97L5.88 12.23L4.21 11.27L2.55 11.87L1.24 9.60L2.59 8.46L2.59 6.54L1.24 5.40L2.55 3.13L4.21 3.73Z" fill="none" stroke="#ebe7df" stroke-width="1.25" stroke-linejoin="round"/><circle cx="7.5" cy="7.5" r="2.1" fill="none" stroke="#ebe7df" stroke-width="1.25"/></svg></div>
<div class="cbtn" style="top:100.3px"><svg viewBox="0 0 15 15"><rect x="1.6" y="3.2" width="9.2" height="8.8" fill="none" stroke="#ebe7df" stroke-width="1.2"/><path d="M10.8 6.2L13.3 5V10.4L10.8 9.2" fill="none" stroke="#ebe7df" stroke-width="1.2" stroke-linejoin="round"/><path d="M3.2 5.1H5.2" stroke="#ebe7df" stroke-width="1"/></svg></div>
<div class="cbtn" style="top:132.8px"><svg viewBox="0 0 15 15"><path d="M2.9 11.1L7.4 6.6A3.1 3.1 0 0 1 11.6 2.9L9.5 5 10.1 5.9 11 6.5 13.1 4.4A3.1 3.1 0 0 1 9.4 8.6L4.9 13.1A1.4 1.4 0 0 1 2.9 11.1Z" fill="none" stroke="#ebe7df" stroke-width="1.15" stroke-linejoin="round"/></svg></div>

<div id="panel">
<div class="t" style="top:8.8px">当前操作台号:<span style="margin-left:9px;font-size:10.5px">⑨</span></div>
<div class="t" style="top:34.8px">当前操作盘号:<span style="margin-left:9.3px">9</span></div>
<div class="b dis" style="top:59px">移动到装卸站</div>
<div class="b" style="top:100px">托盘移进机床</div>
<div class="hr" style="top:139px"></div>
<div class="b" style="top:148px">绑定车间工单</div>
<div class="b" style="top:188.5px">解除绑定工单</div>
<div class="b" style="top:229px">重置加工状态</div>
<div class="b" style="top:269.5px">NC 程序 预览</div>
<div class="b" style="top:310px">更换 NC 程序</div>
<div class="hr" style="top:350px"></div>
</div>
</div>
</body>
</html>
